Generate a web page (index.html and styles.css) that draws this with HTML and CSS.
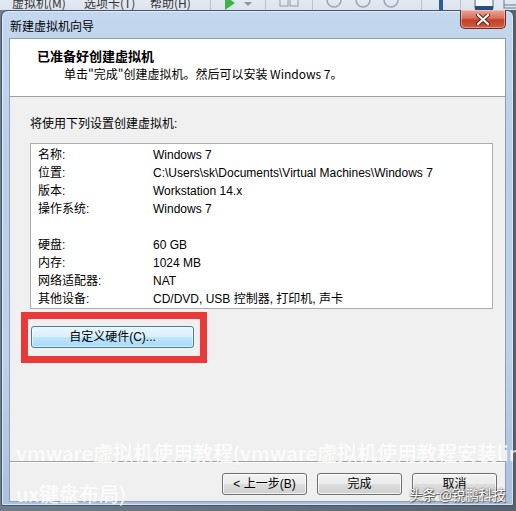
FILE: index.html
```html
<!DOCTYPE html>
<html lang="zh-CN">
<head>
<meta charset="utf-8">
<title>新建虚拟机向导</title>
<link rel="stylesheet" href="styles.css">
</head>
<body>
<div class="desk">
  <div class="appbar">
    <div class="menus">
      <span class="menu m1">虚拟机(M)</span>
      <span class="menu m2">选项卡(T)</span>
      <span class="menu m3">帮助(H)</span>
    </div>
    <div class="tools">
      <span class="sep"></span>
      <svg class="tool" width="14" height="10" viewBox="0 0 14 10"><path d="M2 -4 L12 3 L2 10 Z" fill="#3db34a"/></svg>
      <svg class="tool" width="10" height="10" viewBox="0 0 10 10"><path d="M1 2 L9 2 L5 6 Z" fill="#8a96a6"/></svg>
      <span class="sep"></span>
      <svg class="tool" width="22" height="10" viewBox="0 0 22 10"><rect x="2" y="-4" width="8" height="10" fill="none" stroke="#8f9cab"/><rect x="12" y="-4" width="8" height="10" fill="none" stroke="#8f9cab"/></svg>
      <span class="sep"></span>
      <svg class="tool" width="84" height="10" viewBox="0 0 84 10"><circle cx="9" cy="0" r="7" fill="none" stroke="#9aa6b5" stroke-width="1.5"/><circle cx="38" cy="0" r="7" fill="none" stroke="#9aa6b5" stroke-width="1.5"/><circle cx="66" cy="0" r="7" fill="none" stroke="#9aa6b5" stroke-width="1.5"/></svg>
      <span class="sep"></span>
      <svg class="tool" width="14" height="10" viewBox="0 0 14 10"><rect x="5" y="-2" width="4" height="12" fill="#2a5d9a"/></svg>
      <span class="sep"></span>
      <svg class="tool" width="22" height="10" viewBox="0 0 22 10"><rect x="2" y="-4" width="18" height="12" fill="#f4f7fb" stroke="#51647d"/><rect x="2" y="6" width="18" height="4" fill="#294d7d"/></svg>
      <svg class="tool" width="22" height="10" viewBox="0 0 22 10"><rect x="3" y="-3" width="16" height="11" fill="none" stroke="#6b7a8c"/><line x1="3" y1="5" x2="19" y2="5" stroke="#6b7a8c"/></svg>
    </div>
  </div>

  <div class="window">
    <div class="titlebar">
      <span class="title">新建虚拟机向导</span>
      <button class="close" type="button" aria-label="关闭">
        <svg width="14" height="11" viewBox="0 0 14 11"><path d="M2 1 L12 10 M12 1 L2 10" stroke="#5a1d12" stroke-width="4" stroke-linecap="round"/><path d="M2 1 L12 10 M12 1 L2 10" stroke="#ffffff" stroke-width="2.2" stroke-linecap="round"/></svg>
      </button>
    </div>

    <div class="client">
      <div class="header">
        <div class="head-title">已准备好创建虚拟机</div>
        <div class="head-sub">单击"完成"创建虚拟机。然后可以安装 Windows 7。</div>
      </div>

      <div class="main">
        <p class="intro">将使用下列设置创建虚拟机:</p>
        <div class="summary">
          <div class="row"><span class="label">名称:</span><span class="value">Windows 7</span></div>
          <div class="row"><span class="label">位置:</span><span class="value">C:\Users\sk\Documents\Virtual Machines\Windows 7</span></div>
          <div class="row"><span class="label">版本:</span><span class="value">Workstation 14.x</span></div>
          <div class="row"><span class="label">操作系统:</span><span class="value">Windows 7</span></div>
          <div class="row blank"></div>
          <div class="row"><span class="label">硬盘:</span><span class="value">60 GB</span></div>
          <div class="row"><span class="label">内存:</span><span class="value">1024 MB</span></div>
          <div class="row"><span class="label">网络适配器:</span><span class="value">NAT</span></div>
          <div class="row"><span class="label">其他设备:</span><span class="value">CD/DVD, USB 控制器, 打印机, 声卡</span></div>
        </div>
        <div class="custom-wrap">
          <button class="btn btn-focus custom" type="button">自定义硬件(C)...</button>
          <div class="highlight"></div>
        </div>
      </div>

      <div class="footer">
        <button class="btn" type="button">&lt; 上一步(B)</button>
        <button class="btn" type="button">完成</button>
        <button class="btn" type="button">取消</button>
      </div>
    </div>
  </div>

  <div class="watermark">vmware虚拟机使用教程(vmware虚拟机使用教程安装lin<br>ux键盘布局)</div>
  <div class="credit">头条 @锐鹏科技</div>
</div>
</body>
</html>
```

FILE: styles.css
```css
* { box-sizing: border-box; }

html, body {
  margin: 0;
  padding: 0;
}

body {
  width: 516px;
  height: 511px;
  overflow: hidden;
  background: #56626f;
  font-family: "Liberation Sans", "Noto Sans CJK SC", sans-serif;
  font-size: 12px;
  color: #000;
}

.desk {
  position: relative;
  width: 516px;
  height: 511px;
  background: linear-gradient(to right, #6f7d8d 0, #56626f 100%);
}

/* background application bar, mostly hidden */
.appbar {
  height: 10px;
  overflow: hidden;
  display: flex;
  align-items: flex-start;
  background: linear-gradient(#e4eaf2, #dbe3ee);
}

.menus {
  display: flex;
  padding-left: 12px;
  margin-top: -4px;
  line-height: 14px;
  color: #333333;
  font-family: "Noto Sans CJK SC", sans-serif;
  font-size: 12px;
}

.m1 { width: 72px; }
.m2 { width: 66px; }
.m3 { width: 50px; }

.tools {
  display: flex;
  align-items: flex-start;
  gap: 6px;
  margin-left: 4px;
}

.sep {
  width: 1px;
  height: 10px;
  background: #b9c3cf;
  margin: 0 6px;
}

.tool { display: block; }

/* dialog window */
.window {
  position: relative;
  width: 513px;
  margin-left: 1px;
  height: 496px;
  border: 1px solid #44546a;
  border-radius: 7px 7px 2px 2px;
  padding: 0 7px 3px 7px;
  background: linear-gradient(to bottom, #c3d7ee 0, #b9d0ea 30%, #bcd2ea 70%, #a9c1de 100%);
  box-shadow: inset 0 0 0 1px rgba(255, 255, 255, 0.55);
}

.titlebar {
  height: 27px;
  display: flex;
  align-items: center;
  padding-left: 1px;
}

.title {
  font-size: 12px;
  line-height: 16px;
  color: #000;
  font-family: "Noto Sans CJK SC", sans-serif;
  padding-top: 2px;
}

.close {
  position: absolute;
  top: -1px;
  right: 7px;
  width: 46px;
  height: 19px;
  padding: 0;
  border: 1px solid #6b2a1f;
  border-top: none;
  border-radius: 0 0 5px 5px;
  background: linear-gradient(to bottom, #e9a597 0, #d8705f 45%, #c4402b 55%, #d05a40 100%);
  box-shadow: inset 0 0 0 1px rgba(255, 220, 210, 0.5);
  display: flex;
  align-items: center;
  justify-content: center;
}

.close svg { display: block; }

.client {
  width: 497px;
  height: 464px;
  border: 1px solid #8d9fb5;
  background: #f0f0f0;
  display: flex;
  flex-direction: column;
}

.header {
  height: 58px;
  flex: none;
  background: #fff;
  border-bottom: 1px solid #a0a0a0;
  padding: 8px 0 0 27px;
  font-family: "Noto Sans CJK SC", sans-serif;
}

.head-title {
  font-size: 13px;
  font-weight: bold;
  line-height: 18px;
}

.head-sub {
  font-size: 12px;
  line-height: 18px;
  padding-left: 27px;
}

.main {
  flex: 1;
  padding: 18px 0 0 20px;
}

.intro {
  margin: 0;
  line-height: 18px;
}

.summary {
  margin-top: 10px;
  width: 463px;
  height: 166px;
  border: 1px solid #abadb3;
  background: #fff;
  padding: 2px 0 0 7px;
}

.row {
  display: flex;
  height: 18px;
  line-height: 18px;
  white-space: nowrap;
}

.label {
  width: 115px;
  flex: none;
}

.custom-wrap {
  position: relative;
  display: inline-block;
  margin: 17px 0 0 1px;
}

.highlight {
  position: absolute;
  left: -10px;
  top: -14px;
  width: 186px;
  height: 51px;
  border: 7px solid #e83a38;
  pointer-events: none;
}

.btn {
  width: 85px;
  height: 22px;
  padding: 0;
  border: 1px solid #707070;
  border-radius: 3px;
  background: linear-gradient(to bottom, #f3f3f3 0, #ebebeb 48%, #dddddd 52%, #cfcfcf 100%);
  box-shadow: inset 0 0 0 1px rgba(255, 255, 255, 0.75);
  font-family: "Liberation Sans", "Noto Sans CJK SC", sans-serif;
  font-size: 12px;
  color: #000;
  line-height: 18px;
}

.btn-focus {
  border-color: #3c7fb1;
  background: linear-gradient(to bottom, #eaf6fd 0, #d9f0fc 48%, #bee6fd 52%, #a7d9f5 100%);
  box-shadow: inset 0 0 0 1px rgba(255, 255, 255, 0.6);
}

.custom {
  display: block;
  width: 163px;
}

.footer {
  flex: none;
  height: 40px;
  border-top: 1px solid #a0a0a0;
  box-shadow: inset 0 1px 0 #ffffff;
  padding: 11px 8px 0 0;
  display: flex;
  justify-content: flex-end;
  gap: 10px;
}

/* overlay watermarks */
.watermark {
  position: absolute;
  left: 16px;
  top: 432px;
  width: 500px;
  font-family: "Noto Sans CJK SC", sans-serif;
  font-weight: 500;
  font-size: 20px;
  line-height: 41px;
  color: rgba(255, 255, 255, 0.82);
  white-space: nowrap;
  pointer-events: none;
}

.credit {
  position: absolute;
  left: 409px;
  top: 484px;
  font-family: "Noto Sans CJK SC", sans-serif;
  font-size: 13.5px;
  line-height: 20px;
  color: #ffffff;
  text-shadow: 0 0 2px #3a3a3a, 1px 1px 1px #555;
  white-space: nowrap;
  pointer-events: none;
}
```
